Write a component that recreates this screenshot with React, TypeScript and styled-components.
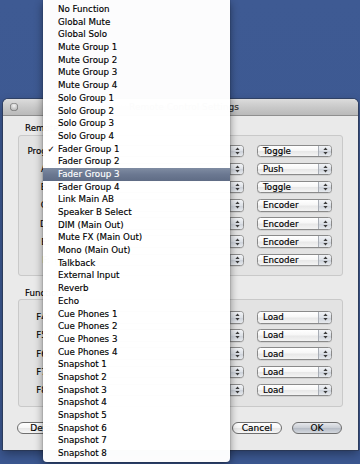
import React from "react";
import styled, { createGlobalStyle } from "styled-components";

const GlobalStyle = createGlobalStyle`
  html, body { margin: 0; padding: 0; background: #3d5891; }
  body {
    font-family: "Lucida Grande", "DejaVu Sans", "Noto Sans", sans-serif;
    font-size: 8.7px;
    color: #000;
    -webkit-text-stroke: 0.15px currentColor;
  }
  * { box-sizing: border-box; }
`;

const Desktop = styled.div`
  position: relative;
  width: 360px;
  height: 464px;
  overflow: hidden;
  background: linear-gradient(180deg, #3e5a93 0%, #3b5790 100%);
  padding: 99px 0 0 3px;
`;

const Window = styled.div`
  width: 355px;
  height: 351px;
  border-radius: 5px 5px 0 0;
  background: #eaeaea;
  box-shadow: 0 0 0 1px rgba(40, 50, 70, 0.55), 0 4px 10px rgba(0, 0, 0, 0.35);
  display: flex;
  flex-direction: column;
  overflow: hidden;
`;

const TitleBar = styled.div`
  height: 17px;
  flex: 0 0 17px;
  display: grid;
  grid-template-columns: 1fr auto 1fr;
  align-items: center;
  padding-left: 7px;
  background: linear-gradient(180deg, #dcdcdc 0%, #c9c9c9 50%, #bababa 100%);
  border-bottom: 1px solid #8f8f8f;
  border-radius: 5px 5px 0 0;
`;

const CloseButton = styled.span`
  width: 8px;
  height: 8px;
  border-radius: 50%;
  background: radial-gradient(circle at 50% 35%, #f4f4f4 0%, #c9c9c9 45%, #9a9a9a 100%);
  box-shadow: inset 0 0 0 0.6px #6e6e6e;
`;

const Title = styled.span`
  font-size: 9px;
  color: #2a2a2a;
  white-space: nowrap;
`;

const WindowBody = styled.div`
  flex: 1;
  display: flex;
  flex-direction: column;
  padding: 6.5px 15px 0 15px;
`;

const SectionLabel = styled.div<{ $top?: number }>`
  height: 11px;
  line-height: 11px;
  margin: ${(p) => p.$top ?? 0}px 0 ${(p) => (p.$top ? 0.5 : 1.5)}px 7px;
  white-space: nowrap;
`;

const GroupBox = styled.div<{ $h: number; $pt: number }>`
  height: ${(p) => p.$h}px;
  padding: ${(p) => p.$pt}px 12px 0 0;
  border: 1px solid #c9c9c9;
  border-radius: 3px;
  background: #e3e3e3;
  display: grid;
  grid-template-columns: 36px 189px 88px;
  grid-auto-rows: 12.5px;
  row-gap: 5.7px;
  align-items: center;
`;

const FieldLabel = styled.span`
  text-align: right;
  padding-right: 5.3px;
  white-space: nowrap;
`;

const PopUp = styled.div<{ $w?: number }>`
  justify-self: end;
  width: ${(p) => (p.$w ? `${p.$w}px` : "100%")};
  height: 12.5px;
  border: 1px solid #8a8a8a;
  border-radius: 3.5px;
  background: linear-gradient(180deg, #ffffff 0%, #f7f7f7 45%, #e8e8e8 55%, #f4f4f4 100%);
  display: flex;
  align-items: center;
  overflow: hidden;
  box-shadow: 0 0.5px 0.5px rgba(0, 0, 0, 0.15);
`;

const PopUpText = styled.span`
  flex: 1;
  padding-left: 5px;
  line-height: 10px;
  white-space: nowrap;
`;

const Stepper = styled.span`
  flex: 0 0 13px;
  height: 100%;
  border-left: 1px solid #a9aeb6;
  background: linear-gradient(180deg, #f1f3f6 0%, #dde1e7 50%, #ccd1d9 52%, #e7eaee 100%);
  display: flex;
  align-items: center;
  justify-content: center;
`;

const ButtonBar = styled.div`
  margin-top: 15px;
  display: flex;
  gap: 11px;
  align-items: center;
`;

const PushButton = styled.button<{ $default?: boolean; $w: number; $push?: boolean }>`
  width: ${(p) => p.$w}px;
  height: 12px;
  padding: 0;
  margin: 0 ${(p) => (p.$default ? 1 : 0)}px 0 ${(p) => (p.$push ? "auto" : "-1px")};
  font: inherit;
  font-size: 9px;
  line-height: 10px;
  color: #000;
  border: 1px solid #6f6f6f;
  border-radius: 7px;
  background: ${(p) =>
    p.$default
      ? "linear-gradient(180deg, #e6e8ec 0%, #c9cdd4 50%, #b6bcc6 52%, #d3d7dd 100%)"
      : "linear-gradient(180deg, #ffffff 0%, #f6f6f6 50%, #e7e7e7 52%, #f5f5f5 100%)"};
`;

const Menu = styled.div`
  position: absolute;
  left: 43px;
  top: 0;
  width: 187px;
  height: 462px;
  padding-top: 3px;
  background: rgba(255, 255, 255, 0.985);
  box-shadow: 0 3px 9px rgba(0, 0, 0, 0.45), 0 0 0 0.5px rgba(0, 0, 0, 0.15);
  border-radius: 0 0 4px 4px;
`;

const MenuItem = styled.div<{ $selected?: boolean }>`
  position: relative;
  height: 12.7px;
  line-height: 12.7px;
  padding-left: 15px;
  white-space: nowrap;
  color: ${(p) => (p.$selected ? "#ffffff" : "#000")};
  background: ${(p) =>
    p.$selected ? "linear-gradient(180deg, #7f8ca2 0%, #6b7891 50%, #5f6c85 100%)" : "transparent"};
`;

const Check = styled.span`
  position: absolute;
  left: 4.5px;
  top: 0;
  font-size: 8.5px;
`;

const StepArrows = () => (
  <svg width="5" height="8" viewBox="0 0 5 8">
    <path d="M2.5 0.6 L4.6 3.1 L0.4 3.1 Z" fill="#3a3a3a" />
    <path d="M2.5 7.4 L4.6 4.9 L0.4 4.9 Z" fill="#3a3a3a" />
  </svg>
);

const Select = ({ text, w }: { text?: string; w?: number }) => (
  <PopUp $w={w}>
    <PopUpText>{text}</PopUpText>
    <Stepper>
      <StepArrows />
    </Stepper>
  </PopUp>
);

const remoteRows: [string, string][] = [
  ["Prog:", "Toggle"],
  ["A:", "Push"],
  ["B:", "Toggle"],
  ["C:", "Encoder"],
  ["D:", "Encoder"],
  ["E:", "Encoder"],
  ["F:", "Encoder"],
];

const functionRows = ["F4:", "F5:", "F6:", "F7:", "F8:"];

const menuItems = [
  "No Function",
  "Global Mute",
  "Global Solo",
  "Mute Group 1",
  "Mute Group 2",
  "Mute Group 3",
  "Mute Group 4",
  "Solo Group 1",
  "Solo Group 2",
  "Solo Group 3",
  "Solo Group 4",
  "Fader Group 1",
  "Fader Group 2",
  "Fader Group 3",
  "Fader Group 4",
  "Link Main AB",
  "Speaker B Select",
  "DIM (Main Out)",
  "Mute FX (Main Out)",
  "Mono (Main Out)",
  "Talkback",
  "External Input",
  "Reverb",
  "Echo",
  "Cue Phones 1",
  "Cue Phones 2",
  "Cue Phones 3",
  "Cue Phones 4",
  "Snapshot 1",
  "Snapshot 2",
  "Snapshot 3",
  "Snapshot 4",
  "Snapshot 5",
  "Snapshot 6",
  "Snapshot 7",
  "Snapshot 8",
];

export default function App() {
  return (
    <>
      <GlobalStyle />
      <Desktop>
        <Window>
          <TitleBar>
            <CloseButton />
            <Title>Remote Control Settings</Title>
            <span />
          </TitleBar>
          <WindowBody>
            <SectionLabel>Remote Control</SectionLabel>
            <GroupBox $h={141} $pt={8.5}>
              {remoteRows.map(([label, mode]) => (
                <React.Fragment key={label}>
                  <FieldLabel>{label}</FieldLabel>
                  <Select />
                  <Select text={mode} w={75} />
                </React.Fragment>
              ))}
            </GroupBox>
            <SectionLabel $top={11.5}>Function Keys</SectionLabel>
            <GroupBox $h={108} $pt={11}>
              {functionRows.map((label) => (
                <React.Fragment key={label}>
                  <FieldLabel>{label}</FieldLabel>
                  <Select />
                  <Select text="Load" w={75} />
                </React.Fragment>
              ))}
            </GroupBox>
            <ButtonBar>
              <PushButton $w={64}>Defaults</PushButton>
              <PushButton $w={50} $push>
                Cancel
              </PushButton>
              <PushButton $w={50} $default>
                OK
              </PushButton>
            </ButtonBar>
          </WindowBody>
        </Window>
        <Menu>
          {menuItems.map((item, i) => (
            <MenuItem key={item} $selected={i === 13}>
              {i === 11 && <Check>✓</Check>}
              {item}
            </MenuItem>
          ))}
        </Menu>
      </Desktop>
    </>
  );
}
